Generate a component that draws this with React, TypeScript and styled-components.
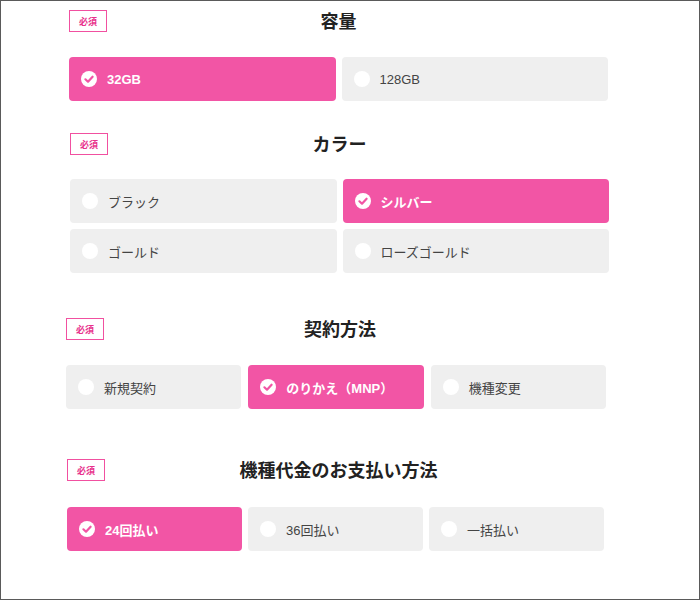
import styled, { createGlobalStyle } from 'styled-components';

// 선택 옵션 데이터
type Option = { label: string; selected?: boolean };

type SectionData = {
	title: string;
	columns: number;
	indent: number;
	width: number;
	top: number;
	headGap: number;
	titleShift: number;
	gap: number;
	options: Option[];
};

const sections: SectionData[] = [
	{
		title: '容量',
		columns: 2,
		indent: 68,
		width: 539,
		top: 9,
		headGap: 25,
		titleShift: 0,
		gap: 6,
		options: [{ label: '32GB', selected: true }, { label: '128GB' }],
	},
	{
		title: 'カラー',
		columns: 2,
		indent: 69,
		width: 539,
		top: 32,
		headGap: 24,
		titleShift: 0,
		gap: 6,
		options: [{ label: 'ブラック' }, { label: 'シルバー', selected: true }, { label: 'ゴールド' }, { label: 'ローズゴールド' }],
	},
	{
		title: '契約方法',
		columns: 3,
		indent: 65,
		width: 540,
		top: 45,
		headGap: 25,
		titleShift: 4,
		gap: 7,
		options: [{ label: '新規契約' }, { label: 'のりかえ（MNP）', selected: true }, { label: '機種変更' }],
	},
	{
		title: '機種代金のお支払い方法',
		columns: 3,
		indent: 66,
		width: 537,
		top: 50,
		headGap: 26,
		titleShift: 3,
		gap: 6,
		options: [{ label: '24回払い', selected: true }, { label: '36回払い' }, { label: '一括払い' }],
	},
];

const PINK = '#f255a5';

function CheckIcon() {
	return (
		<svg width="16" height="16" viewBox="0 0 16 16">
			<circle cx="8" cy="8" r="8" fill="#fff" />
			<polyline points="4.4,8.3 7,10.7 11.6,5.7" fill="none" stroke={PINK} strokeWidth="2.2" strokeLinecap="round" strokeLinejoin="round" />
		</svg>
	);
}

export default function App() {
	return (
		<>
			<GlobalStyle />
			<Frame>
				{sections.map((section) => (
					<Section
						key={section.title}
						$indent={section.indent}
						$width={section.width}
						$top={section.top}
						$headGap={section.headGap}
					>
						<Heading $shift={section.titleShift}>
							<Badge>必須</Badge>
							<Title>{section.title}</Title>
						</Heading>
						<OptionGrid $columns={section.columns} $gap={section.gap}>
							{section.options.map((option) => (
								<OptionButton key={option.label} $selected={!!option.selected}>
									{option.selected ? <CheckIcon /> : <Dot />}
									<OptionLabel $selected={!!option.selected}>{option.label}</OptionLabel>
								</OptionButton>
							))}
						</OptionGrid>
					</Section>
				))}
			</Frame>
		</>
	);
}

const GlobalStyle = createGlobalStyle`
	body {
		margin: 0;
		background: #fff;
		font-family: "Liberation Sans", "Noto Sans CJK JP", sans-serif;
	}
`;

const Frame = styled.div`
	box-sizing: border-box;
	width: 700px;
	height: 600px;
	border: 1px solid #5a5a5a;
	overflow: hidden;
	display: flex;
	flex-direction: column;
`;

const Section = styled.section<{ $indent: number; $width: number; $top: number; $headGap: number }>`
	margin-left: ${({ $indent }) => $indent}px;
	margin-top: ${({ $top }) => $top}px;
	width: ${({ $width }) => $width}px;
	display: flex;
	flex-direction: column;
	gap: ${({ $headGap }) => $headGap}px;
`;

// 제목을 가운데 두고, 오른쪽 여백으로 중심을 살짝 옮긴다
const Heading = styled.div<{ $shift: number }>`
	display: grid;
	grid-template-columns: 1fr auto 1fr;
	align-items: center;
	height: 22px;
	margin-right: ${({ $shift }) => -2 * $shift}px;
`;

const Badge = styled.span`
	box-sizing: border-box;
	width: 38px;
	height: 22px;
	border: 1px solid #f150a0;
	display: flex;
	align-items: center;
	justify-content: center;
	color: #e8318c;
	font-size: 9px;
	font-weight: 700;
	font-family: "Noto Sans CJK JP", sans-serif;
`;

const Title = styled.h2`
	margin: -3px 0 0;
	font-size: 18px;
	line-height: 22px;
	font-weight: 700;
	color: #222;
	font-family: "Noto Sans CJK JP", sans-serif;
`;

const OptionGrid = styled.div<{ $columns: number; $gap: number }>`
	display: grid;
	grid-template-columns: repeat(${({ $columns }) => $columns}, 1fr);
	gap: 6px ${({ $gap }) => $gap}px;
`;

const OptionButton = styled.div<{ $selected: boolean }>`
	height: 44px;
	border-radius: 4px;
	background: ${({ $selected }) => ($selected ? PINK : '#efefef')};
	display: flex;
	align-items: center;
	gap: 10px;
	padding-left: 12px;
`;

const Dot = styled.span`
	width: 16px;
	height: 16px;
	border-radius: 50%;
	background: #fff;
	flex-shrink: 0;
`;

const OptionLabel = styled.span<{ $selected: boolean }>`
	font-size: 13px;
	font-weight: ${({ $selected }) => ($selected ? 700 : 400)};
	color: ${({ $selected }) => ($selected ? '#fff' : '#444')};
`;
